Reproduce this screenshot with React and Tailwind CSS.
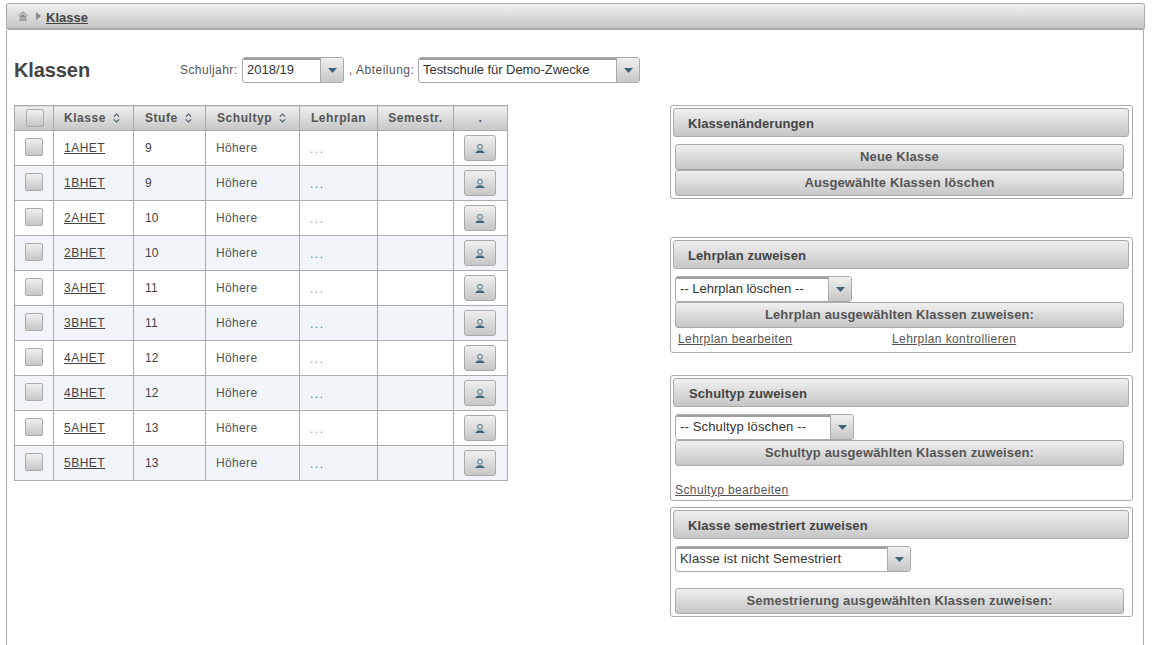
import React from "react";

const grad = "bg-gradient-to-b from-[#f0f0f0] to-[#c6c6c6]";
const rows = [
  ["1AHET", 9], ["1BHET", 9], ["2AHET", 10], ["2BHET", 10], ["3AHET", 11],
  ["3BHET", 11], ["4AHET", 12], ["4BHET", 12], ["5AHET", 13], ["5BHET", 13],
];

function Sort() {
  return (
    <svg width="7" height="10" viewBox="0 0 7 10" className="ml-[7px] shrink-0" fill="none" stroke="#4f6470" strokeWidth="1.2">
      <path d="M.8 3.6 3.5 1l2.7 2.6" />
      <path d="M.8 6.4 3.5 9l2.7-2.6" />
    </svg>
  );
}

function Arrow() {
  return (
    <svg width="9" height="5" viewBox="0 0 9 5">
      <path d="M0 0h9L4.5 5z" fill="#3f6478" />
    </svg>
  );
}

function Select({ text, w, sw = 23, track = "tracking-[0px]" }) {
  return (
    <div style={{ width: w }} className="flex h-[26px] border border-[#aaa] rounded-[3px] overflow-hidden bg-white shrink-0 text-[13px]">
      <div className={`flex-1 min-w-0 pl-[4px] flex items-center text-[#333] whitespace-nowrap border-t-2 border-t-[#a0a0a0] pb-[2px] ${track}`}>{text}</div>
      <div style={{ width: sw }} className={`border-l border-[#aaa] flex items-center justify-center shrink-0 ${grad}`}>
        <Arrow />
      </div>
    </div>
  );
}

function Btn({ children, className = "" }) {
  return (
    <div className={`h-[26px] border border-[#aaa] rounded-[3px] flex items-center justify-center text-[13px] font-bold text-[#555] tracking-[0.14px] ${grad} ${className}`}>
      {children}
    </div>
  );
}

function Panel({ title, className = "", pad = "pl-[14px]", children }) {
  return (
    <div className={`border border-[#aaa] rounded-[3px] px-[4px] pt-[2px] ${className}`}>
      <div className={`-ml-[2px] w-[456px] h-[29px] pt-[2px] border border-[#aaa] rounded-[3px] flex items-center text-[13px] font-bold text-[#444] tracking-[0.1px] ${pad} ${grad}`}>
        {title}
      </div>
      {children}
    </div>
  );
}

function Th({ children, sort, pad = "pl-[10px]" }) {
  return (
    <th className={`border border-[#aaa] p-0 font-bold text-[12px] text-[#555] tracking-[0.55px] ${grad}`}>
      <div className={`flex items-center h-[24px] ${sort ? pad : "justify-center"}`}>
        {children}
        {sort && <Sort />}
      </div>
    </th>
  );
}

function Check({ className = "" }) {
  return <div className={`w-[18px] h-[18px] border border-[#aaa] rounded-[2px] ${grad} ${className}`} />;
}

export default function App() {
  return (
    <div className="h-[645px] overflow-hidden bg-white px-[6px] pt-[3px] font-['Liberation_Sans',Arial,sans-serif] text-[12px] text-[#555]">
      <div className={`h-[27px] w-[1139px] border border-[#aaa] border-b-2 rounded-[3px] flex items-center pl-[11px] ${grad}`}>
        <svg width="10" height="10" viewBox="0 0 10 10" fill="#8a8a8a">
          <path d="M5 .5 0 4.5l.5.6L5 1.8l4.5 3.3.5-.6zM1.5 5.6 5 3l3.5 2.6v.9h-7zM2 7h1.5v2H2zM4.3 7h1.4v2H4.3zM6.5 7H8v2H6.5zM1 9h8v.8H1z" />
        </svg>
        <svg width="5" height="8" viewBox="0 0 5 8" className="ml-[8px]">
          <path d="M0 0l5 4-5 4z" fill="#8a8a8a" />
        </svg>
        <a className="ml-[5px] mt-[3px] text-[13px] font-bold text-[#444] underline">Klasse</a>
      </div>

      <div className="w-[1138px] h-[620px] border-x border-[#aaa] pl-[7px] pr-[10px] pt-[27px]">
        <div className="flex items-center h-[26px]">
          <h1 className="w-[166px] text-[20px] font-bold text-[#444] -mt-[1px] tracking-[-0.1px]">Klassen</h1>
          <span className="tracking-[0.4px] w-[62px]">Schuljahr:</span>
          <Select text="2018/19" w={102} />
          <span className="ml-[5px] w-[69px] tracking-[0.5px] whitespace-nowrap">, Abteilung:</span>
          <Select text="Testschule für Demo-Zwecke" w={222} sw={23} track="tracking-[-0.05px]" />
        </div>

        <div className="flex items-start mt-[22px]">
          <table className="border-collapse table-fixed w-[494px] shrink-0">
            <colgroup>
              <col className="w-[39px]" /><col className="w-[80px]" /><col className="w-[72px]" />
              <col className="w-[94px]" /><col className="w-[78px]" /><col className="w-[76px]" /><col className="w-[54px]" />
            </colgroup>
            <thead>
              <tr>
                <Th><Check className="ml-[1px]" /></Th>
                <Th sort>Klasse</Th>
                <Th sort pad="pl-[11px]">Stufe</Th>
                <Th sort pad="pl-[11px]">Schultyp</Th>
                <Th>Lehrplan</Th>
                <Th>Semestr.</Th>
                <Th>.</Th>
              </tr>
            </thead>
            <tbody>
              {rows.map(([k, s], i) => (
                <tr key={k} className={`h-[35px] ${i % 2 ? "bg-[#f1f5f9]" : "bg-white"}`}>
                  <td className="border border-[#aaa] p-0">
                    <div className="flex justify-center pb-[3px]"><Check className="-ml-[1px]" /></div>
                  </td>
                  <td className="border border-[#aaa] pl-[10px] py-0 tracking-[0.5px]"><a className="underline text-[#444]">{k}</a></td>
                  <td className="border border-[#aaa] pl-[11px] py-0 text-[#444] tracking-[0.2px]">{s}</td>
                  <td className="border border-[#aaa] pl-[10px] py-0 tracking-[0.35px]">Höhere</td>
                  <td className={`border border-[#aaa] pl-[10px] py-0 tracking-[1.5px] pt-[2px] ${i % 2 ? "text-[#3a87c8]" : "text-[#999]"}`}>...</td>
                  <td className="border border-[#aaa] p-0"></td>
                  <td className="border border-[#aaa] p-0">
                    <div className={`ml-[10px] w-[32px] h-[26px] border border-[#aaa] rounded-[3px] flex items-center justify-center ${grad}`}>
                      <svg width="10" height="9" viewBox="0 0 10 9" fill="none">
                        <circle cx="5" cy="2.8" r="2.4" stroke="#3f6478" strokeWidth="0.9" />
                        <path d="M2.5 6.5h5L10 9H0z" fill="#3f6478" />
                      </svg>
                    </div>
                  </td>
                </tr>
              ))}
            </tbody>
          </table>

          <div className="ml-[162px] w-[463px] shrink-0">
            <Panel title="Klassenänderungen" className="h-[94px]">
              <Btn className="mt-[7px] w-[449px]">Neue Klasse</Btn>
              <Btn className="w-[449px]">Ausgewählte Klassen löschen</Btn>
            </Panel>

            <Panel title="Lehrplan zuweisen" className="h-[116px] mt-[38px]">
              <div className="mt-[7px]"><Select text="-- Lehrplan löschen --" w={177} sw={23} /></div>
              <Btn className="w-[449px]">Lehrplan ausgewählten Klassen zuweisen:</Btn>
              <div className="flex mt-[4px] pl-[3px] tracking-[0.4px] leading-[15px]">
                <a className="w-[214px] underline text-[#555]">Lehrplan bearbeiten</a>
                <a className="underline text-[#555]">Lehrplan kontrollieren</a>
              </div>
            </Panel>

            <Panel title="Schultyp zuweisen" pad="pl-[15px]" className="h-[126px] mt-[22px]">
              <div className="mt-[7px]"><Select text="-- Schultyp löschen --" w={179} sw={23} track="tracking-[0.15px]" /></div>
              <Btn className="w-[449px]">Schultyp ausgewählten Klassen zuweisen:</Btn>
              <a className="block mt-[17px] underline text-[#555] tracking-[0.4px] leading-[15px]">Schultyp bearbeiten</a>
            </Panel>

            <Panel title="Klasse semestriert zuweisen" className="h-[110px] mt-[6px]">
              <div className="mt-[7px]"><Select text="Klasse ist nicht Semestriert" w={236} sw={23} track="tracking-[0.16px]" /></div>
              <Btn className="mt-[16px] w-[449px]">Semestrierung ausgewählten Klassen zuweisen:</Btn>
            </Panel>
          </div>
        </div>
      </div>
    </div>
  );
}
